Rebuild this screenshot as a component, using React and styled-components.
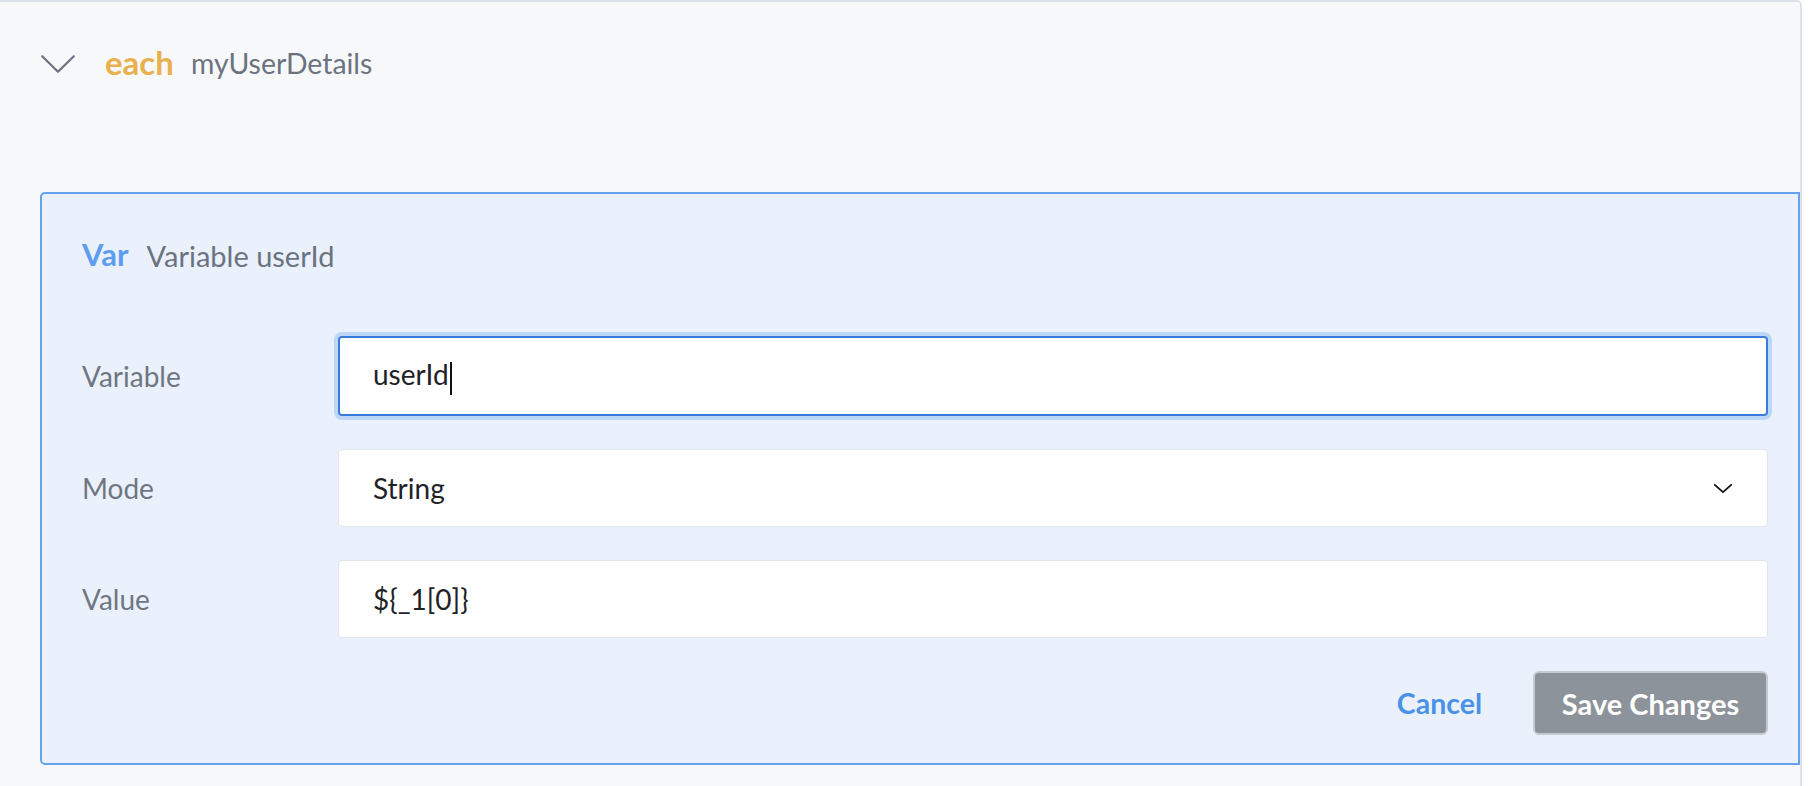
import React from "react";
import styled, { createGlobalStyle } from "styled-components";

const GlobalStyle = createGlobalStyle`
  html, body {
    margin: 0;
    padding: 0;
    background: #ffffff;
  }
  body {
    font-family: "Lato", "Open Sans", sans-serif;
  }
`;

const Block = styled.section`
  box-sizing: border-box;
  width: 1802px;
  min-height: 786px;
  background: #f7f8fa;
  border-top: 2px solid #dde2ea;
  border-right: 2px solid #dde1e8;
  border-top-right-radius: 5px;
  padding-left: 40px;
  overflow: hidden;
`;

const BlockHeader = styled.div`
  display: flex;
  align-items: center;
  height: 120px;
`;

const Toggle = styled.button`
  display: flex;
  align-items: center;
  padding: 0;
  margin: 4px 29px 0 0;
  background: none;
  border: none;
  cursor: pointer;
`;

const Keyword = styled.span`
  font-size: ${(p) => p.size || 33}px;
  font-weight: 700;
  color: ${(p) => p.color};
  margin-right: ${(p) => p.gap || 17}px;
`;

const Name = styled.span`
  font-size: ${(p) => p.size || 29}px;
  color: #6b7380;
  margin-top: 2px;
`;

const Panel = styled.div`
  box-sizing: border-box;
  margin-top: 70px;
  background: #eaf1fc;
  border: 2px solid #66a3ed;
  border-radius: 5px 0 0 5px;
  padding: 0 30px 28px 40px;
`;

const PanelHeader = styled.div`
  display: flex;
  align-items: center;
  height: 120px;
  margin-bottom: 22px;
`;

const Form = styled.div`
  display: grid;
  grid-template-columns: 256px 1fr;
  align-items: center;
  row-gap: 33px;
`;

const Label = styled.label`
  font-size: 28px;
  color: #6f7681;
`;

const Field = styled.div`
  box-sizing: border-box;
  display: flex;
  align-items: center;
  justify-content: space-between;
  height: ${(p) => (p.focused ? 80 : 78)}px;
  padding: 0 ${(p) => (p.focused ? 33 : 34)}px;
  background: #ffffff;
  border: ${(p) => (p.focused ? "2px solid #3a7bdc" : "1px solid #e1e5eb")};
  border-radius: 4px;
  box-shadow: ${(p) => (p.focused ? "0 0 0 4px #bdd7f7" : "none")};
  font-size: 28px;
  color: #1f2328;
`;

const Caret = styled.span`
  display: inline-block;
  width: 2px;
  height: 33px;
  margin-left: 1px;
  background: #111111;
  vertical-align: middle;
`;

const Actions = styled.div`
  display: flex;
  justify-content: flex-end;
  align-items: center;
  margin-top: 33px;
`;

const LinkButton = styled.button`
  padding: 0;
  margin-right: 51px;
  background: none;
  border: none;
  font-family: inherit;
  font-size: 28.5px;
  font-weight: 700;
  color: #4a92e6;
  cursor: pointer;
`;

const SaveButton = styled.button`
  box-sizing: border-box;
  width: 235px;
  height: 64px;
  background: #8d939a;
  border: 2px solid #c6c9cd;
  border-radius: 6px;
  font-family: inherit;
  font-size: 29px;
  font-weight: 700;
  color: #ffffff;
  cursor: pointer;
`;

const Chevron = ({ width, height, color, stroke }) => (
  <svg width={width} height={height} viewBox={`0 0 ${width} ${height}`} fill="none">
    <path
      d={`M${stroke} ${stroke} L${width / 2} ${height - stroke} L${width - stroke} ${stroke}`}
      stroke={color}
      strokeWidth={stroke}
      strokeLinecap="round"
      strokeLinejoin="round"
    />
  </svg>
);

const App = () => {
  return (
    <>
      <GlobalStyle />
      <Block>
        <BlockHeader>
          <Toggle aria-label="collapse">
            <Chevron width={36} height={20} color="#6b7280" stroke={2.2} />
          </Toggle>
          <Keyword color="#e9b04f">each</Keyword>
          <Name size={28.4}>myUserDetails</Name>
        </BlockHeader>

        <Panel>
          <PanelHeader>
            <Keyword color="#5e9ded" size={31} gap={18}>
              Var
            </Keyword>
            <Name>Variable userId</Name>
          </PanelHeader>

          <Form>
            <Label>Variable</Label>
            <Field focused>
              <span>
                userId
                <Caret />
              </span>
            </Field>

            <Label>Mode</Label>
            <Field>
              <span>String</span>
              <Chevron width={20} height={11} color="#111111" stroke={1.8} />
            </Field>

            <Label>Value</Label>
            <Field>
              <span>{"${_1[0]}"}</span>
            </Field>
          </Form>

          <Actions>
            <LinkButton>Cancel</LinkButton>
            <SaveButton>Save Changes</SaveButton>
          </Actions>
        </Panel>
      </Block>
    </>
  );
};

export default App;
